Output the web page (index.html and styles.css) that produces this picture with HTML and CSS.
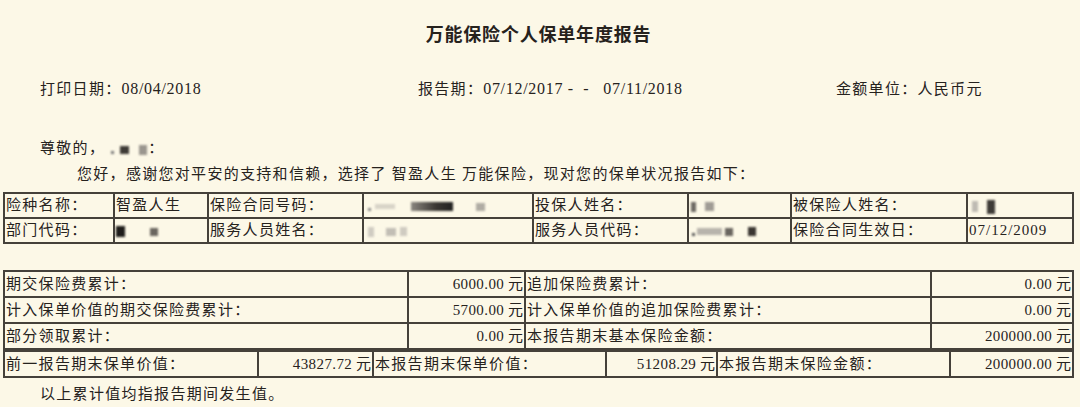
FILE: index.html
```html
<!DOCTYPE html>
<html lang="zh-CN">
<head>
<meta charset="utf-8">
<title>万能保险个人保单年度报告</title>
<link rel="stylesheet" href="styles.css">
</head>
<body>
<div class="page">
  <h1 class="title">万能保险个人保单年度报告</h1>
  <div class="meta">
    <span class="meta-print">打印日期：<span class="num">08/04/2018</span></span>
    <span class="meta-period">报告期：<span class="num">07/12/2017 -&nbsp; -&nbsp;&nbsp; 07/11/2018</span></span>
    <span class="meta-unit">金额单位：人民币元</span>
  </div>
  <p class="greet">尊敬的<span class="comma">，</span><span class="redact rd-dot"></span><span class="redact rd-g1"></span><span class="redact rd-g2"></span>：</p>
  <p class="hello">您好，感谢您对平安的支持和信赖，选择了 智盈人生 万能保险，现对您的保单状况报告如下：</p>

  <div class="grid info">
    <div class="cell">险种名称：</div>
    <div class="cell">智盈人生</div>
    <div class="cell">保险合同号码：</div>
    <div class="cell"><span class="redact rd-a1"></span><span class="redact rd-a2"></span><span class="redact rd-a3"></span><span class="redact rd-a4"></span></div>
    <div class="cell">投保人姓名：</div>
    <div class="cell"><span class="redact rd-b1"></span><span class="redact rd-b2"></span></div>
    <div class="cell">被保险人姓名：</div>
    <div class="cell"><span class="redact rd-c1"></span><span class="redact rd-c2"></span></div>

    <div class="cell">部门代码：</div>
    <div class="cell"><span class="redact rd-d1"></span><span class="redact rd-d2"></span></div>
    <div class="cell">服务人员姓名：</div>
    <div class="cell"><span class="redact rd-e1"></span><span class="redact rd-e2"></span><span class="redact rd-e3"></span></div>
    <div class="cell">服务人员代码：</div>
    <div class="cell"><span class="redact rd-f1"></span><span class="redact rd-f2"></span><span class="redact rd-f3"></span><span class="redact rd-f4"></span></div>
    <div class="cell">保险合同生效日：</div>
    <div class="cell"><span class="num">07/12/2009</span></div>
  </div>

  <div class="grid sums">
    <div class="cell">期交保险费累计：</div>
    <div class="cell amt"><span class="num">6000.00</span> 元</div>
    <div class="cell">追加保险费累计：</div>
    <div class="cell amt"><span class="num">0.00</span> 元</div>

    <div class="cell">计入保单价值的期交保险费累计：</div>
    <div class="cell amt"><span class="num">5700.00</span> 元</div>
    <div class="cell">计入保单价值的追加保险费累计：</div>
    <div class="cell amt"><span class="num">0.00</span> 元</div>

    <div class="cell">部分领取累计：</div>
    <div class="cell amt"><span class="num">0.00</span> 元</div>
    <div class="cell">本报告期末基本保险金额：</div>
    <div class="cell amt"><span class="num">200000.00</span> 元</div>
  </div>

  <div class="grid values">
    <div class="cell">前一报告期末保单价值：</div>
    <div class="cell amt"><span class="num">43827.72</span> 元</div>
    <div class="cell">本报告期末保单价值：</div>
    <div class="cell amt"><span class="num">51208.29</span> 元</div>
    <div class="cell">本报告期末保险金额：</div>
    <div class="cell amt"><span class="num">200000.00</span> 元</div>
  </div>

  <p class="note">以上累计值均指报告期间发生值。</p>
</div>
</body>
</html>
```

FILE: styles.css
```css
html, body {
  margin: 0;
  padding: 0;
}

body {
  background: #fcf8e7;
  color: #26221d;
  font-family: "Liberation Serif", "Noto Sans CJK SC", serif;
  font-size: 15px;
  letter-spacing: 1.3px;
}

.page {
  padding: 0 0 0 3px;
  width: 1071px;
}

.title {
  margin: 0;
  padding-top: 23px;
  height: 24px;
  line-height: 24px;
  text-align: center;
  font-size: 18px;
  font-weight: bold;
  letter-spacing: 0.8px;
}

.num {
  letter-spacing: 0.4px;
}

.meta {
  display: flex;
  margin-top: 32px;
  padding-left: 37px;
  height: 20px;
  line-height: 20px;
}

.meta .num {
  font-size: 16px;
  letter-spacing: 0.7px;
}

.meta-print {
  flex: 0 0 378px;
}

.meta-period {
  flex: 0 0 418px;
}

.greet {
  margin: 39px 0 0;
  padding-left: 37px;
  height: 20px;
  line-height: 20px;
}

.comma {
  margin-right: 2px;
}

.hello {
  margin: 6px 0 0;
  padding-left: 74px;
  height: 20px;
  line-height: 20px;
}

/* grids acting as the printed tables */
.grid {
  display: grid;
  border-top: 2px solid #45413a;
  border-left: 2px solid #45413a;
}

.cell {
  box-sizing: border-box;
  border-right: 2px solid #45413a;
  border-bottom: 2px solid #45413a;
  padding: 0 0 0 1px;
  white-space: nowrap;
  overflow: hidden;
}

.info {
  margin-top: 8px;
  grid-template-columns: 110px 94px 155px 170px 155px 103px 176px 106px;
}

.info .cell {
  height: 25px;
  line-height: 23px;
}

.info .num {
  letter-spacing: 1px;
}

.sums {
  margin-top: 26px;
  grid-template-columns: 404px 117px 406px 142px;
}

.values {
  grid-template-columns: 254px 115px 233px 111px 233px 123px;
}

.sums .cell,
.values .cell {
  height: 26px;
  line-height: 24px;
}

.amt {
  text-align: right;
  padding: 0 1px 0 0;
  letter-spacing: 0;
}

.note {
  margin: 6px 0 0;
  padding-left: 37px;
  height: 20px;
  line-height: 20px;
}

/* blurred (redacted) personal data */
.redact {
  display: inline-block;
  vertical-align: middle;
  filter: blur(1.2px);
  background: #8a8680;
  height: 9px;
  letter-spacing: 0;
}

.rd-dot { width: 3px; height: 3px; margin: 6px 6px 0 4px; background: #777; }
.rd-g1 { width: 9px; height: 8px; margin-right: 10px; background: #3e3b37; }
.rd-g2 { width: 8px; height: 10px; margin-right: 1px; background: #9a968f; }

.rd-a1 { width: 3px; height: 3px; margin: 6px 4px 0 3px; background: #888; }
.rd-a2 { width: 20px; height: 5px; margin-right: 16px; background: #d8d4c8; }
.rd-a3 { width: 42px; height: 9px; margin-right: 23px; background: linear-gradient(90deg, #8a8680, #3a3632 60%, #222); }
.rd-a4 { width: 9px; height: 8px; background: #b0aca4; }

.rd-b1 { width: 5px; height: 10px; margin: 0 9px 0 1px; background: #6e6a64; }
.rd-b2 { width: 9px; height: 9px; background: #a09c95; }

.rd-c1 { width: 6px; height: 11px; margin: 0 9px 0 3px; background: #bfbbb3; }
.rd-c2 { width: 8px; height: 14px; background: #3e3b37; }

.rd-d1 { width: 9px; height: 11px; margin: 0 25px 0 0; background: #1e1c1a; }
.rd-d2 { width: 8px; height: 8px; background: #6a6660; }

.rd-e1 { width: 6px; height: 10px; margin: 0 12px 0 3px; background: #d0ccc2; }
.rd-e2 { width: 10px; height: 8px; margin-right: 4px; background: #c2beb5; }
.rd-e3 { width: 7px; height: 9px; background: #cfcbc1; }

.rd-f1 { width: 3px; height: 3px; margin: 6px 2px 0 2px; background: #555; }
.rd-f2 { width: 25px; height: 7px; margin-right: 3px; background: #b8b4ac; }
.rd-f3 { width: 8px; height: 8px; margin-right: 9px; background: #6a6660; }
.rd-f4 { width: 8px; height: 9px; margin-left: 6px; background: #3a3632; }
```
